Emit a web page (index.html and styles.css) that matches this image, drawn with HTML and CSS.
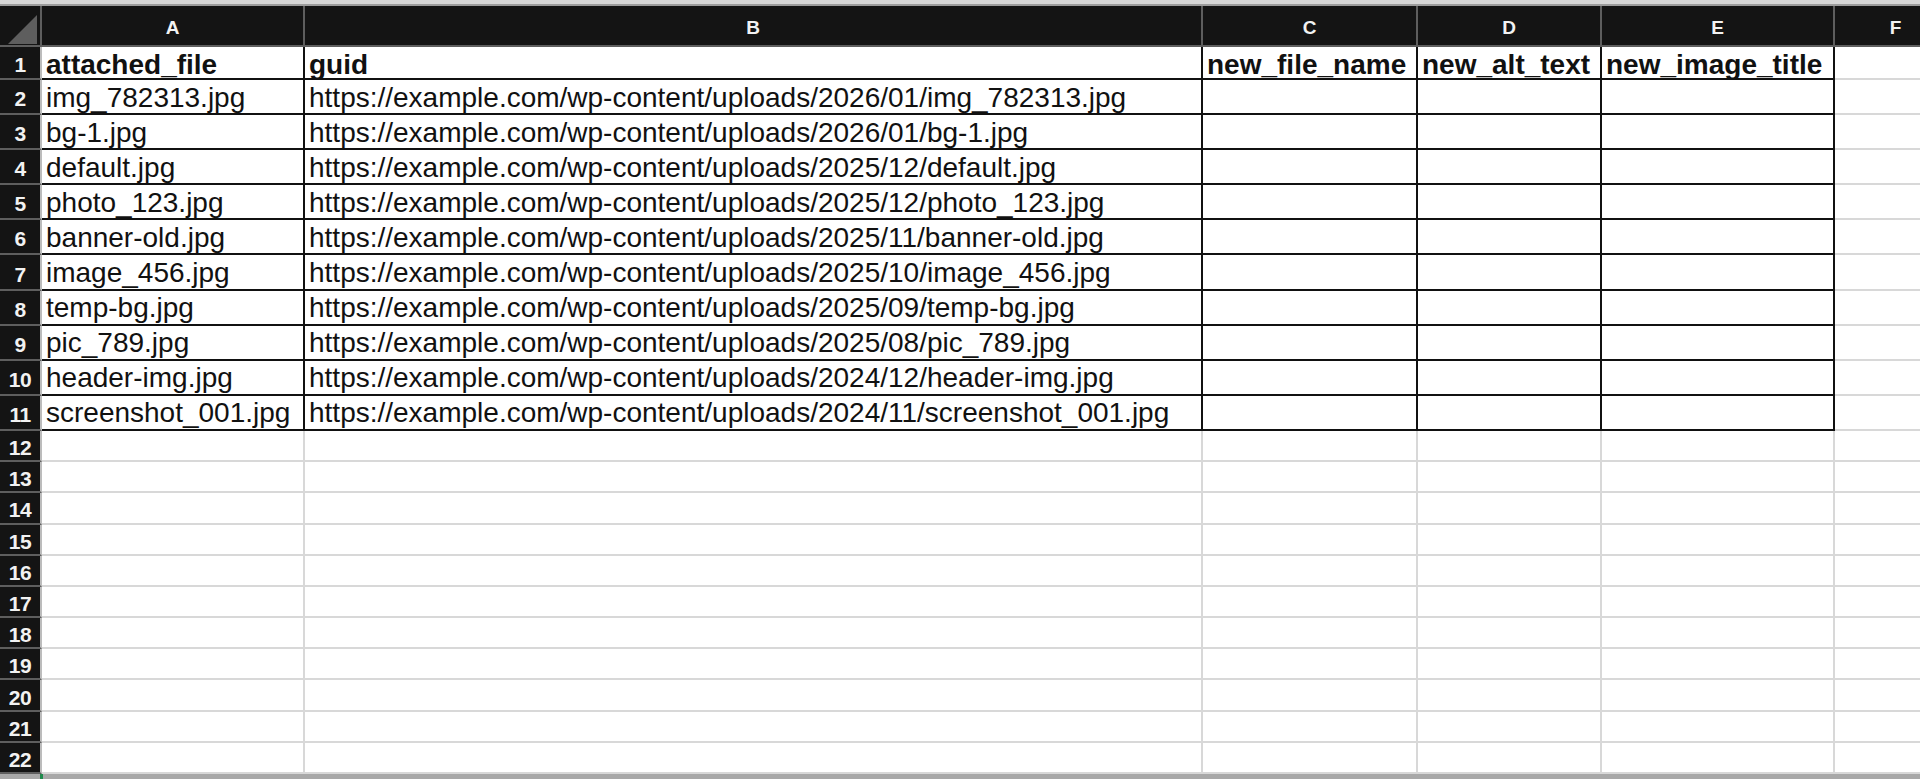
FILE: index.html
```html
<!DOCTYPE html>
<html>
<head>
<meta charset="utf-8">
<link rel="stylesheet" href="styles.css">
</head>
<body>
<div class="sheet">
  <div class="topbar"></div>
  <div class="row hdr">
    <div class="rh corner">
      <svg class="tri" width="30" height="30" viewBox="0 0 30 30"><polygon points="29,0 29,29 0,29" fill="#5e5e5e"/></svg>
    </div>
    <div class="ch ca">A</div>
    <div class="ch cb">B</div>
    <div class="ch cc">C</div>
    <div class="ch cd">D</div>
    <div class="ch ce">E</div>
    <div class="ch cf">F</div>
    <div class="ch cg"></div>
  </div>

  <div class="row r1">
    <div class="rh">1</div>
    <div class="c d ca b">attached_file</div>
    <div class="c d cb b">guid</div>
    <div class="c d cc b">new_file_name</div>
    <div class="c d cd b">new_alt_text</div>
    <div class="c d ce b">new_image_title</div>
    <div class="c e cf"></div>
    <div class="c e cg"></div>
  </div>
  <div class="row rd">
    <div class="rh">2</div>
    <div class="c d ca">img_782313.jpg</div>
    <div class="c d cb">https://example.com/wp-content/uploads/2026/01/img_782313.jpg</div>
    <div class="c d cc"></div><div class="c d cd"></div><div class="c d ce"></div>
    <div class="c e cf"></div><div class="c e cg"></div>
  </div>
  <div class="row rd">
    <div class="rh">3</div>
    <div class="c d ca">bg-1.jpg</div>
    <div class="c d cb">https://example.com/wp-content/uploads/2026/01/bg-1.jpg</div>
    <div class="c d cc"></div><div class="c d cd"></div><div class="c d ce"></div>
    <div class="c e cf"></div><div class="c e cg"></div>
  </div>
  <div class="row rd">
    <div class="rh">4</div>
    <div class="c d ca">default.jpg</div>
    <div class="c d cb">https://example.com/wp-content/uploads/2025/12/default.jpg</div>
    <div class="c d cc"></div><div class="c d cd"></div><div class="c d ce"></div>
    <div class="c e cf"></div><div class="c e cg"></div>
  </div>
  <div class="row rd">
    <div class="rh">5</div>
    <div class="c d ca">photo_123.jpg</div>
    <div class="c d cb">https://example.com/wp-content/uploads/2025/12/photo_123.jpg</div>
    <div class="c d cc"></div><div class="c d cd"></div><div class="c d ce"></div>
    <div class="c e cf"></div><div class="c e cg"></div>
  </div>
  <div class="row rd">
    <div class="rh">6</div>
    <div class="c d ca">banner-old.jpg</div>
    <div class="c d cb">https://example.com/wp-content/uploads/2025/11/banner-old.jpg</div>
    <div class="c d cc"></div><div class="c d cd"></div><div class="c d ce"></div>
    <div class="c e cf"></div><div class="c e cg"></div>
  </div>
  <div class="row rd">
    <div class="rh">7</div>
    <div class="c d ca">image_456.jpg</div>
    <div class="c d cb">https://example.com/wp-content/uploads/2025/10/image_456.jpg</div>
    <div class="c d cc"></div><div class="c d cd"></div><div class="c d ce"></div>
    <div class="c e cf"></div><div class="c e cg"></div>
  </div>
  <div class="row rd">
    <div class="rh">8</div>
    <div class="c d ca">temp-bg.jpg</div>
    <div class="c d cb">https://example.com/wp-content/uploads/2025/09/temp-bg.jpg</div>
    <div class="c d cc"></div><div class="c d cd"></div><div class="c d ce"></div>
    <div class="c e cf"></div><div class="c e cg"></div>
  </div>
  <div class="row rd">
    <div class="rh">9</div>
    <div class="c d ca">pic_789.jpg</div>
    <div class="c d cb">https://example.com/wp-content/uploads/2025/08/pic_789.jpg</div>
    <div class="c d cc"></div><div class="c d cd"></div><div class="c d ce"></div>
    <div class="c e cf"></div><div class="c e cg"></div>
  </div>
  <div class="row rd">
    <div class="rh">10</div>
    <div class="c d ca">header-img.jpg</div>
    <div class="c d cb">https://example.com/wp-content/uploads/2024/12/header-img.jpg</div>
    <div class="c d cc"></div><div class="c d cd"></div><div class="c d ce"></div>
    <div class="c e cf"></div><div class="c e cg"></div>
  </div>
  <div class="row rd">
    <div class="rh">11</div>
    <div class="c d ca">screenshot_001.jpg</div>
    <div class="c d cb">https://example.com/wp-content/uploads/2024/11/screenshot_001.jpg</div>
    <div class="c d cc"></div><div class="c d cd"></div><div class="c d ce"></div>
    <div class="c e cf"></div><div class="c e cg"></div>
  </div>

  <div class="row re"><div class="rh">12</div><div class="c e ca"></div><div class="c e cb"></div><div class="c e cc"></div><div class="c e cd"></div><div class="c e ce"></div><div class="c e cf"></div><div class="c e cg"></div></div>
  <div class="row re"><div class="rh">13</div><div class="c e ca"></div><div class="c e cb"></div><div class="c e cc"></div><div class="c e cd"></div><div class="c e ce"></div><div class="c e cf"></div><div class="c e cg"></div></div>
  <div class="row re"><div class="rh">14</div><div class="c e ca"></div><div class="c e cb"></div><div class="c e cc"></div><div class="c e cd"></div><div class="c e ce"></div><div class="c e cf"></div><div class="c e cg"></div></div>
  <div class="row re"><div class="rh">15</div><div class="c e ca"></div><div class="c e cb"></div><div class="c e cc"></div><div class="c e cd"></div><div class="c e ce"></div><div class="c e cf"></div><div class="c e cg"></div></div>
  <div class="row re"><div class="rh">16</div><div class="c e ca"></div><div class="c e cb"></div><div class="c e cc"></div><div class="c e cd"></div><div class="c e ce"></div><div class="c e cf"></div><div class="c e cg"></div></div>
  <div class="row re"><div class="rh">17</div><div class="c e ca"></div><div class="c e cb"></div><div class="c e cc"></div><div class="c e cd"></div><div class="c e ce"></div><div class="c e cf"></div><div class="c e cg"></div></div>
  <div class="row re"><div class="rh">18</div><div class="c e ca"></div><div class="c e cb"></div><div class="c e cc"></div><div class="c e cd"></div><div class="c e ce"></div><div class="c e cf"></div><div class="c e cg"></div></div>
  <div class="row re"><div class="rh">19</div><div class="c e ca"></div><div class="c e cb"></div><div class="c e cc"></div><div class="c e cd"></div><div class="c e ce"></div><div class="c e cf"></div><div class="c e cg"></div></div>
  <div class="row re"><div class="rh">20</div><div class="c e ca"></div><div class="c e cb"></div><div class="c e cc"></div><div class="c e cd"></div><div class="c e ce"></div><div class="c e cf"></div><div class="c e cg"></div></div>
  <div class="row re"><div class="rh">21</div><div class="c e ca"></div><div class="c e cb"></div><div class="c e cc"></div><div class="c e cd"></div><div class="c e ce"></div><div class="c e cf"></div><div class="c e cg"></div></div>
  <div class="row re"><div class="rh">22</div><div class="c e ca"></div><div class="c e cb"></div><div class="c e cc"></div><div class="c e cd"></div><div class="c e ce"></div><div class="c e cf"></div><div class="c e cg"></div></div>

  <div class="bottombar"><div class="sel"></div></div>
</div>
</body>
</html>
```

FILE: styles.css
```css
html, body {
  margin: 0;
  padding: 0;
  background: #ffffff;
  overflow: hidden;
}
.sheet {
  width: 1920px;
  height: 779px;
  overflow: hidden;
  font-family: "Liberation Sans", Arial, sans-serif;
  color: #111111;
}
.topbar {
  height: 4px;
  background: #d6d6d6;
  border-bottom: 2px solid #9c9c9c;
}
.row {
  display: flex;
  box-sizing: border-box;
}
.hdr { height: 41px; background: #141414; }
.r1 { height: 33px; }
.rd { height: 35.1px; }
.re { height: 31.2px; }

.rh {
  flex: 0 0 42px;
  box-sizing: border-box;
  background: #141414;
  color: #f2f2f2;
  font-weight: bold;
  font-size: 21px;
  letter-spacing: -0.5px;
  display: flex;
  align-items: center;
  justify-content: center;
  padding-top: 5px;
  border-bottom: 2px solid #5e5e5e;
  border-right: 2px solid #bcbcbc;
}
.corner {
  position: relative;
  padding: 0;
  border-bottom: 2px solid #5e5e5e;
  border-right: 2px solid #5e5e5e;
}
.tri {
  position: absolute;
  left: 8px;
  top: 9px;
}

.ch {
  box-sizing: border-box;
  color: #f2f2f2;
  font-weight: bold;
  font-size: 19px;
  display: flex;
  align-items: center;
  justify-content: center;
  padding-top: 4px;
  border-right: 2px solid #5e5e5e;
  border-bottom: 2px solid #5e5e5e;
}

.ca { flex: 0 0 263px; }
.cb { flex: 0 0 898px; }
.cc { flex: 0 0 215px; }
.cd { flex: 0 0 184px; }
.ce { flex: 0 0 233px; }
.cf { flex: 0 0 123px; }
.cg { flex: 0 0 200px; }

.c {
  box-sizing: border-box;
  font-size: 28px;
  line-height: 28px;
  white-space: nowrap;
  overflow: hidden;
  display: flex;
  align-items: center;
  padding-left: 4px;
  padding-top: 2px;
}
.r1 .c {
  padding-top: 4px;
}
.c.d {
  border-right: 2px solid #111111;
  border-bottom: 2px solid #111111;
}
.c.e {
  border-right: 2px solid #d8d8d8;
  border-bottom: 2px solid #d8d8d8;
}
.b { font-weight: bold; }

.bottombar {
  height: 6px;
  background: #a8a8a8;
  position: relative;
}
.sel {
  position: absolute;
  left: 40px;
  top: 0;
  width: 3px;
  height: 5px;
  background: #1f8a4c;
}
```
